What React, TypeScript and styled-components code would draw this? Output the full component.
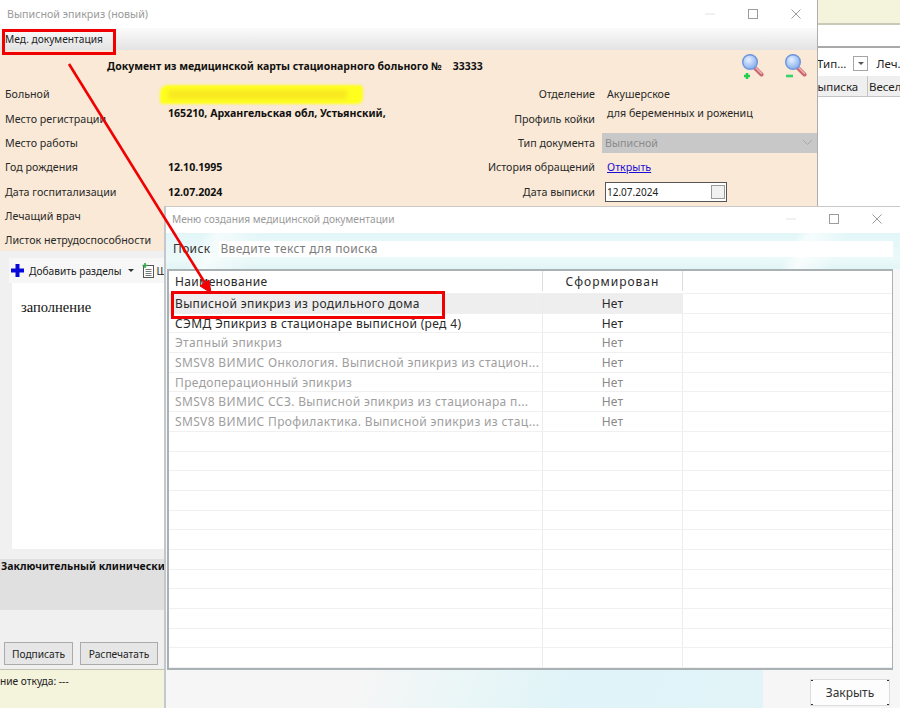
import React from "react";
import styled, { createGlobalStyle } from "styled-components";

const Global = createGlobalStyle`
  html, body { margin: 0; padding: 0; background: #fff; }
  #root { width: 900px; height: 708px; }
  * { box-sizing: border-box; }
`;

const Desktop = styled.div`
  position: relative;
  width: 900px;
  height: 708px;
  overflow: hidden;
  background: #fff;
  font-family: "Noto Sans", "Open Sans", sans-serif;
  font-size: 10.7px;
  color: #222;
`;

/* ---------- window behind everything, right edge ---------- */
const BackWindow = styled.div`
  position: absolute;
  left: 810px;
  top: 0;
  width: 90px;
  height: 206px;
  display: flex;
  flex-direction: column;
  background: #fff;
`;
const BackBanner = styled.div`
  height: 25px;
  background: #f4f3dc;
  border-bottom: 2px solid #c9c9b8;
`;
const BackSearch = styled.div`
  height: 23px;
  background: #fff;
  border-bottom: 2px solid #a9a9a9;
`;
const BackFilters = styled.div`
  height: 28px;
  display: flex;
  align-items: center;
  padding: 2px 0 0 7px;
  background: #fff;
  white-space: nowrap;
  overflow: hidden;
  font-size: 11.5px;
`;
const BackFilterText = styled.span<{ $pad?: number }>`
  padding-left: ${(p) => p.$pad ?? 0}px;
`;
const BackDrop = styled.span`
  width: 15px;
  height: 15px;
  margin-left: 7px;
  border: 1px solid #a5a5a5;
  display: inline-flex;
  align-items: center;
  justify-content: center;
  flex: none;
  &::after {
    content: "";
    border: 3px solid transparent;
    border-top: 3px solid #555;
    margin-top: 3px;
  }
`;
const BackHeader = styled.div`
  height: 21px;
  display: flex;
  align-items: center;
  background: #efefef;
  border-bottom: 1px solid #c4c4c4;
  white-space: nowrap;
  overflow: hidden;
  font-size: 11.5px;
`;
const BackHeadCell = styled.span<{ $w: number }>`
  flex: none;
  width: ${(p) => p.$w}px;
  height: 100%;
  line-height: 21px;
  border-right: 1px solid #c4c4c4;
  padding-left: 1px;
  overflow: hidden;
`;

/* ---------- main window ---------- */
const MainWindow = styled.div`
  position: absolute;
  left: 0;
  top: 0;
  width: 818px;
  height: 708px;
  display: flex;
  flex-direction: column;
  background: #f0f0f0;
  border-right: 1px solid #aeaeae;
`;
const TitleBar = styled.div<{ $h: number }>`
  height: ${(p) => p.$h}px;
  flex: none;
  display: flex;
  align-items: center;
  background: #fff;
  color: #9a9a9a;
  font-size: 10.7px;
  padding-left: 7px;
`;
const TitleText = styled.span`
  flex: 1;
`;
const Controls = styled.div<{ $gap: number; $right: number }>`
  display: flex;
  align-items: center;
  gap: ${(p) => p.$gap}px;
  padding-right: ${(p) => p.$right}px;
`;
const MenuBar = styled.div`
  height: 22px;
  flex: none;
  display: flex;
  align-items: center;
  padding: 0 0 1px 5px;
  background: linear-gradient(#fbfbfb, #e3e3e3);
  color: #222;
  font-size: 10.2px;
`;
const InfoPanel = styled.div`
  height: 201px;
  flex: none;
  background: #f9e9d6;
  padding-top: 4px;
`;
const DocHeading = styled.div`
  height: 24px;
  display: flex;
  align-items: center;
  font-weight: 700;
  font-size: 10.5px;
  color: #111;
  padding-left: 107px;
`;
const DocNumber = styled.span`
  margin-left: 11px;
  width: 288px;
`;
const ZoomIcons = styled.div`
  display: flex;
  gap: 20px;
`;
const InfoGrid = styled.div`
  display: grid;
  grid-template-columns: 163px 313px 114px 222px;
  grid-auto-rows: 24.35px;
  margin-top: 4px;
  padding-left: 5px;
  align-items: center;
`;
const Label = styled.div`
  color: #2a2a2a;
  white-space: nowrap;
`;
const RightLabel = styled(Label)`
  text-align: right;
`;
const Value = styled.div`
  font-weight: 700;
  font-size: 10.6px;
  color: #111;
  white-space: nowrap;
`;
const TopValue = styled(Value)`
  align-self: start;
`;
const RightValue = styled.div`
  padding-left: 12px;
  color: #2a2a2a;
  white-space: nowrap;
`;
const RightTopValue = styled(RightValue)`
  align-self: start;
`;
const Combo = styled.div`
  margin-left: 7px;
  height: 20px;
  background: #c8c8c8;
  color: #8b8b8b;
  display: flex;
  align-items: center;
  justify-content: space-between;
  padding: 0 4px 0 3px;
`;
const OpenLink = styled.a`
  color: #1a0dd6;
  text-decoration: underline;
  cursor: pointer;
`;
const DateBox = styled.div`
  margin-left: 10px;
  width: 122px;
  height: 20px;
  background: #fff;
  border: 1px solid #555;
  display: flex;
  align-items: center;
  justify-content: space-between;
  padding: 0 1px 0 1px;
  color: #222;
  font-size: 10px;
`;
const DateButton = styled.span`
  width: 14px;
  height: 14px;
  background: #f1f1f1;
  border: 1px solid #9a9a9a;
`;
const YellowMark = styled.div`
  position: absolute;
  left: 160px;
  top: 85px;
  width: 203px;
  height: 19px;
  background: #ffff1e;
  border-radius: 8px 4px 6px 3px;
  filter: blur(1px);
  &::after {
    content: "";
    position: absolute;
    left: 8px;
    right: 16px;
    top: 5px;
    height: 9px;
    background: rgba(240, 205, 40, 0.45);
    filter: blur(2px);
  }
`;

const EditorArea = styled.div`
  flex: 1;
  display: flex;
  flex-direction: column;
  padding-top: 7px;
  min-height: 0;
`;
const EditorToolbar = styled.div`
  height: 25px;
  flex: none;
  margin-left: 9px;
  display: flex;
  align-items: center;
  gap: 5px;
  padding-left: 2px;
  background: #f7f7f7;
  font-size: 10.2px;
  white-space: nowrap;
`;
const Caret = styled.span`
  border: 3px solid transparent;
  border-top: 3px solid #333;
  margin: 3px 3px 0 1px;
`;
const ToolbarClipped = styled.span`
  margin-left: -2px;
`;
const Editor = styled.div`
  height: 266px;
  flex: none;
  margin-left: 12px;
  padding: 16px 9px;
  background: #fff;
  font-family: "Liberation Serif", serif;
  font-size: 14.5px;
  color: #111;
`;
const ConclusionBand = styled.div`
  height: 51px;
  flex: none;
  margin-top: 10px;
  background: #e0e0e0;
  padding: 0 0 0 1px;
  font-weight: 700;
  font-size: 10.5px;
  color: #111;
  white-space: nowrap;
  line-height: 14px;
`;
const ActionBar = styled.div`
  flex: 1;
  display: flex;
  align-items: flex-end;
  gap: 7px;
  padding: 0 0 4px 4px;
`;
const ActionButton = styled.button<{ $w: number }>`
  width: ${(p) => p.$w}px;
  height: 23px;
  background: #e6e6e6;
  border: 1px solid #ababab;
  font: inherit;
  font-size: 10.2px;
  color: #222;
  padding: 0;
`;
const StatusBar = styled.div`
  height: 39px;
  flex: none;
  background: #f4f3dc;
  border-top: 1px solid #c2c2b0;
  padding-top: 4px;
  font-size: 10.2px;
  white-space: nowrap;
  color: #222;
`;

/* ---------- dialog ---------- */
const Dialog = styled.div`
  position: absolute;
  left: 164px;
  top: 206px;
  width: 736px;
  height: 502px;
  display: flex;
  flex-direction: column;
  background: #f6f6f6;
  border-top: 1px solid #c9c9c9;
  border-left: 2px solid #c2c8cc;
`;
const DialogTitle = styled(TitleBar)`
  padding: 0 0 2px 6px;
  font-size: 10.2px;
`;
const SearchRow = styled.div`
  height: 36px;
  flex: none;
  display: flex;
  align-items: flex-start;
  padding: 8px 7px 0 7px;
  gap: 9px;
  background:
    linear-gradient(115deg, transparent 5%, rgba(255, 255, 255, 0.6) 7%, transparent 13%),
    linear-gradient(115deg, transparent 84%, rgba(255, 255, 255, 0.7) 86%, transparent 91%),
    linear-gradient(180deg, #e2f6f8 0%, #ecf9f9 70%, #e2f5f6 100%);
`;
const SearchLabel = styled.span`
  font-size: 12px;
  letter-spacing: 0.35px;
  line-height: 16px;
  color: #333;
`;
const SearchInput = styled.div`
  flex: 1;
  height: 16px;
  background: #fff;
  color: #7c7c7c;
  font-size: 12px;
  letter-spacing: 0.35px;
  line-height: 16px;
  padding-left: 1px;
`;
const Table = styled.div`
  height: 401px;
  flex: none;
  margin: 0 7px 0 1px;
  background: #fff;
  border: 2px solid #aab1b5;
  border-right-width: 1px;
  overflow: hidden;
`;
const TableRow = styled.div<{ $head?: boolean }>`
  display: grid;
  grid-template-columns: 374px 140px 1fr;
  height: ${(p) => (p.$head ? 23 : 19.7)}px;
  padding-bottom: ${(p) => (p.$head ? 2 : 0)}px;
  border-bottom: 1px solid #f0f0f0;
`;
const NameCell = styled.div<{ $tone: "head" | "on" | "off"; $sel?: boolean }>`
  display: flex;
  align-items: center;
  padding-left: 6px;
  font-size: 12px;
  letter-spacing: 0.35px;
  white-space: nowrap;
  overflow: hidden;
  color: ${(p) => (p.$tone === "off" ? "#9e9e9e" : "#2a2a2a")};
  border-right: 1px solid ${(p) => (p.$tone === "head" ? "#dcdcdc" : "#ececec")};
  background: ${(p) => (p.$sel ? "#eeeeee" : "transparent")};
`;
const StateCell = styled.div<{ $tone: "head" | "on" | "off"; $sel?: boolean }>`
  display: flex;
  align-items: center;
  justify-content: center;
  font-size: 12px;
  letter-spacing: ${(p) => (p.$tone === "head" ? 1 : 0.2)}px;
  color: ${(p) => (p.$tone === "off" ? "#8a8a8a" : "#2a2a2a")};
  border-right: 1px solid ${(p) => (p.$tone === "head" ? "#dcdcdc" : "#ececec")};
  background: ${(p) => (p.$sel ? "#eeeeee" : "transparent")};
`;
const EmptyCell = styled.div``;
const DialogFooter = styled.div`
  flex: 1;
  min-height: 0;
  display: flex;
`;
const FooterArt = styled.div`
  width: 597px;
  flex: none;
  background: linear-gradient(108deg, #f6f6f6 32%, #e9f6f7 52%, #dff3f8 68%, #e2f4f8 100%);
`;
const FooterActions = styled.div`
  flex: 1;
  display: flex;
  justify-content: flex-end;
  align-items: flex-end;
  padding: 0 10px 2px 0;
`;
const corner = "linear-gradient(#333, #333)";
const CloseButton = styled.button`
  width: 80px;
  height: 27px;
  border: 1px solid #dcdcdc;
  font: inherit;
  font-size: 12px;
  color: #333;
  padding: 0;
  background-color: #fdfdfd;
  background-image: ${corner}, ${corner}, ${corner}, ${corner};
  background-size: 3px 2px;
  background-repeat: no-repeat;
  background-origin: border-box;
  background-position: left top, right top, left bottom, right bottom;
`;

/* ---------- annotations ---------- */
const RedFrame = styled.div<{ $x: number; $y: number; $w: number; $h: number }>`
  position: absolute;
  left: ${(p) => p.$x}px;
  top: ${(p) => p.$y}px;
  width: ${(p) => p.$w}px;
  height: ${(p) => p.$h}px;
  border: 3px solid #f00000;
  pointer-events: none;
`;
const ArrowLayer = styled.svg`
  position: absolute;
  left: 0;
  top: 0;
  pointer-events: none;
`;

const Minimize = () => (
  <svg width="10" height="10" viewBox="0 0 10 10"><path d="M0 5h10" stroke="#e2e2e2" strokeWidth="1" /></svg>
);
const Maximize = () => (
  <svg width="10" height="10" viewBox="0 0 10 10"><rect x=".5" y=".5" width="9" height="9" fill="none" stroke="#9c9c9c" /></svg>
);
const CloseX = () => (
  <svg width="10" height="10" viewBox="0 0 10 10"><path d="M.5.5l9 9M9.5.5l-9 9" stroke="#9c9c9c" /></svg>
);

const Magnifier = ({ sign }: { sign: "plus" | "minus" }) => (
  <svg width="23" height="25" viewBox="0 0 23 25">
    <defs>
      <radialGradient id={`lens-${sign}`} cx="40%" cy="35%" r="70%">
        <stop offset="0" stopColor="#e6f1ff" />
        <stop offset="1" stopColor="#7fa9ee" />
      </radialGradient>
    </defs>
    <path d="M13.5 13.5l7 7" stroke="#c9656c" strokeWidth="4" strokeLinecap="round" />
    <path d="M14 13l6.5 6.5" stroke="#f3b6b6" strokeWidth="1.4" strokeLinecap="round" />
    <circle cx="9" cy="8" r="7.3" fill={`url(#lens-${sign})`} stroke="#6f98dc" strokeWidth="1.5" />
    {sign === "plus" ? (
      <path d="M6 19v6M3 22h6" stroke="#1fcf4e" strokeWidth="2.4" />
    ) : (
      <path d="M2 22h7" stroke="#35d46a" strokeWidth="2.6" />
    )}
  </svg>
);

const Chevron = () => (
  <svg width="11" height="7" viewBox="0 0 11 7"><path d="M1 1l4.5 4.5L10 1" fill="none" stroke="#a9a9a9" /></svg>
);
const BluePlus = () => (
  <svg width="13" height="13" viewBox="0 0 13 13"><path d="M6.5 0v13M0 6.5h13" stroke="#0808d8" strokeWidth="4" /></svg>
);
const TemplateIcon = () => (
  <svg width="12" height="15" viewBox="0 0 12 15">
    <rect x="1.5" y="2.5" width="10" height="12" fill="#fff" stroke="#555" />
    <path d="M3.5 6.5h6M3.5 8.5h6M3.5 10.5h6M3.5 12.5h6" stroke="#777" />
    <path d="M3 0v5M.5 2.5h5" stroke="#2ea84a" strokeWidth="1.6" />
  </svg>
);

type Tone = "on" | "off";
const rows: { name: string; tone: Tone; sel?: boolean }[] = [
  { name: "Выписной эпикриз из родильного дома", tone: "on", sel: true },
  { name: "СЭМД Эпикриз в стационаре выписной (ред 4)", tone: "on" },
  { name: "Этапный эпикриз", tone: "off" },
  { name: "SMSV8 ВИМИС Онкология. Выписной эпикриз из стацион...", tone: "off" },
  { name: "Предоперационный эпикриз", tone: "off" },
  { name: "SMSV8 ВИМИС ССЗ. Выписной эпикриз из стационара п...", tone: "off" },
  { name: "SMSV8 ВИМИС Профилактика. Выписной эпикриз из стац...", tone: "off" },
];
const emptyRows = Array.from({ length: 12 }, (_, i) => i);

export default function App() {
  return (
    <Desktop>
      <Global />
      <BackWindow>
        <BackBanner />
        <BackSearch />
        <BackFilters>
          <BackFilterText>Тип...</BackFilterText>
          <BackDrop />
          <BackFilterText $pad={8}>Леч...</BackFilterText>
        </BackFilters>
        <BackHeader>
          <BackHeadCell $w={58}>выписка</BackHeadCell>
          <BackHeadCell $w={40}>Весел</BackHeadCell>
        </BackHeader>
      </BackWindow>

      <MainWindow>
        <TitleBar $h={28}>
          <TitleText>Выписной эпикриз (новый)</TitleText>
          <Controls $gap={33} $right={16}>
            <Minimize />
            <Maximize />
            <CloseX />
          </Controls>
        </TitleBar>
        <MenuBar>Мед. документация</MenuBar>
        <InfoPanel>
          <DocHeading>
            Документ из медицинской карты стационарного больного №
            <DocNumber>33333</DocNumber>
            <ZoomIcons>
              <Magnifier sign="plus" />
              <Magnifier sign="minus" />
            </ZoomIcons>
          </DocHeading>
          <InfoGrid>
            <Label>Больной</Label>
            <Value />
            <RightLabel>Отделение</RightLabel>
            <RightValue>Акушерское</RightValue>

            <Label>Место регистрации</Label>
            <TopValue>165210, Архангельская обл, Устьянский,</TopValue>
            <RightLabel>Профиль койки</RightLabel>
            <RightTopValue>для беременных и рожениц</RightTopValue>

            <Label>Место работы</Label>
            <Value />
            <RightLabel>Тип документа</RightLabel>
            <Combo>
              Выписной
              <Chevron />
            </Combo>

            <Label>Год рождения</Label>
            <Value>12.10.1995</Value>
            <RightLabel>История обращений</RightLabel>
            <RightValue>
              <OpenLink>Открыть</OpenLink>
            </RightValue>

            <Label>Дата госпитализации</Label>
            <Value>12.07.2024</Value>
            <RightLabel>Дата выписки</RightLabel>
            <DateBox>
              12.07.2024
              <DateButton />
            </DateBox>

            <Label>Лечащий врач</Label>
            <Value />
            <RightLabel />
            <RightValue />

            <Label>Листок нетрудоспособности</Label>
          </InfoGrid>
        </InfoPanel>
        <EditorArea>
          <EditorToolbar>
            <BluePlus />
            Добавить разделы
            <Caret />
            <TemplateIcon />
            <ToolbarClipped>Шаблоны</ToolbarClipped>
          </EditorToolbar>
          <Editor>заполнение</Editor>
          <ConclusionBand>Заключительный клинический диагноз</ConclusionBand>
          <ActionBar>
            <ActionButton $w={69}>Подписать</ActionButton>
            <ActionButton $w={78}>Распечатать</ActionButton>
          </ActionBar>
          <StatusBar>ние откуда: ---</StatusBar>
        </EditorArea>
      </MainWindow>
      <YellowMark />

      <Dialog>
        <DialogTitle $h={26}>
          <TitleText>Меню создания медицинской документации</TitleText>
          <Controls $gap={33} $right={18}>
            <Minimize />
            <Maximize />
            <CloseX />
          </Controls>
        </DialogTitle>
        <SearchRow>
          <SearchLabel>Поиск</SearchLabel>
          <SearchInput>Введите текст для поиска</SearchInput>
        </SearchRow>
        <Table>
          <TableRow $head>
            <NameCell $tone="head">Наименование</NameCell>
            <StateCell $tone="head">Сформирован</StateCell>
            <EmptyCell />
          </TableRow>
          {rows.map((r) => (
            <TableRow key={r.name}>
              <NameCell $tone={r.tone} $sel={r.sel}>{r.name}</NameCell>
              <StateCell $tone={r.tone} $sel={r.sel}>Нет</StateCell>
              <EmptyCell />
            </TableRow>
          ))}
          {emptyRows.map((i) => (
            <TableRow key={i}>
              <NameCell $tone="off" />
              <StateCell $tone="off" />
              <EmptyCell />
            </TableRow>
          ))}
        </Table>
        <DialogFooter>
          <FooterArt />
          <FooterActions>
            <CloseButton>Закрыть</CloseButton>
          </FooterActions>
        </DialogFooter>
      </Dialog>

      <RedFrame $x={2} $y={29} $w={114} $h={26} />
      <RedFrame $x={171} $y={291} $w={274} $h={28} />
      <ArrowLayer width="900" height="708" viewBox="0 0 900 708">
        <path d="M69 64L205 283" stroke="#f00000" strokeWidth="2.6" fill="none" />
        <path d="M211 293L200 286L209 280Z" fill="#f00000" stroke="#f00000" strokeWidth="1" />
      </ArrowLayer>
    </Desktop>
  );
}
